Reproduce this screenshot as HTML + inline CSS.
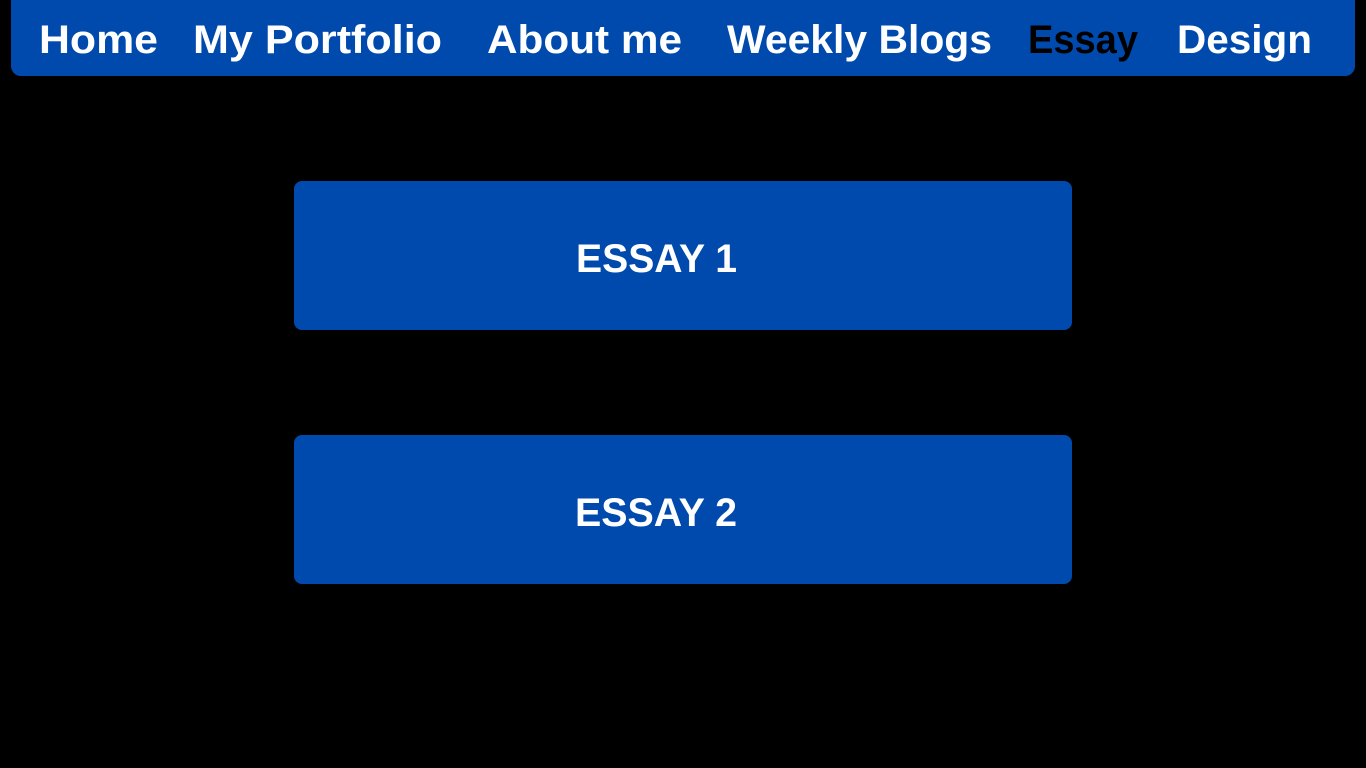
<!DOCTYPE html>
<html><head><style>
html,body{margin:0;padding:0;background:#000;width:1366px;height:768px;overflow:hidden}
svg{display:block}
</style></head><body>
<svg width="1366" height="768" xmlns="http://www.w3.org/2000/svg" font-family="Liberation Sans, sans-serif" font-weight="bold" font-size="40">
<rect x="11" y="-10" width="1344" height="86" rx="10" fill="#004aad"/>
<text x="39" y="53" fill="#fff" textLength="119" lengthAdjust="spacingAndGlyphs">Home</text>
<text x="193" y="53" fill="#fff" textLength="249" lengthAdjust="spacingAndGlyphs">My Portfolio</text>
<text x="487" y="53" fill="#fff" textLength="195" lengthAdjust="spacingAndGlyphs">About me</text>
<text x="727" y="53" fill="#fff" textLength="265" lengthAdjust="spacingAndGlyphs">Weekly Blogs</text>
<text x="1028" y="53" fill="#000" textLength="110" lengthAdjust="spacingAndGlyphs">Essay</text>
<text x="1177" y="53" fill="#fff" textLength="135" lengthAdjust="spacingAndGlyphs">Design</text>
<rect x="294" y="181" width="778" height="149" rx="8" fill="#004aad"/>
<rect x="294" y="435" width="778" height="149" rx="8" fill="#004aad"/>
<text x="576" y="272" fill="#fff" textLength="161" lengthAdjust="spacingAndGlyphs">ESSAY 1</text>
<text x="575" y="526" fill="#fff" textLength="162" lengthAdjust="spacingAndGlyphs">ESSAY 2</text>
</svg>
</body></html>
